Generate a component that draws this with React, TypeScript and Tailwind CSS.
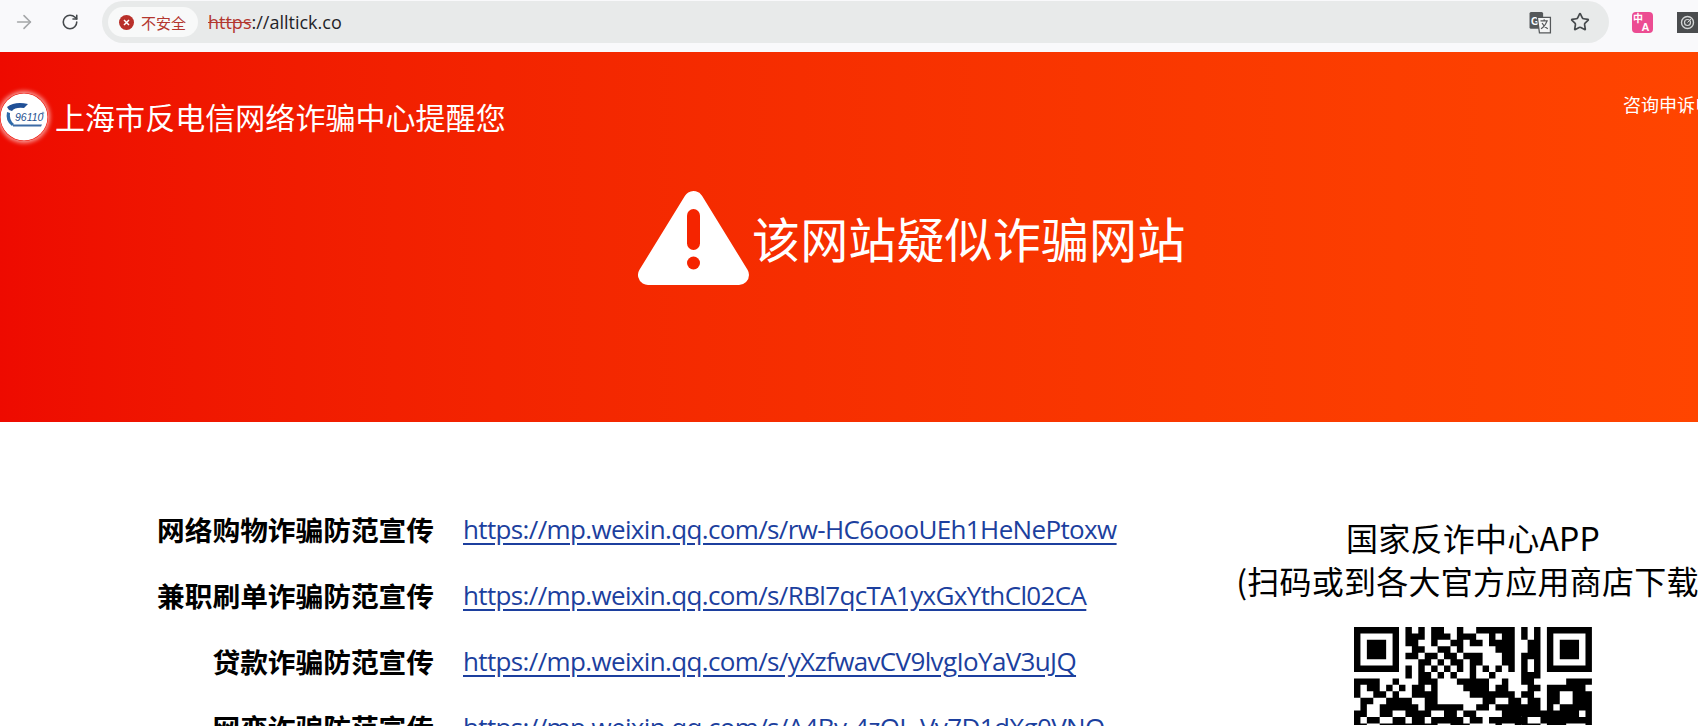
import React from "react";
import { ArrowRight, RotateCw, Star } from "lucide-react";

const CJK = "font-['Noto_Sans_CJK_SC','Noto_Sans',sans-serif]";

const rows = [
  { label: "网络购物诈骗防范宣传", url: "https://mp.weixin.qq.com/s/rw-HC6oooUEh1HeNePtoxw" },
  { label: "兼职刷单诈骗防范宣传", url: "https://mp.weixin.qq.com/s/RBl7qcTA1yxGxYthCl02CA" },
  { label: "贷款诈骗防范宣传", url: "https://mp.weixin.qq.com/s/yXzfwavCV9lvgIoYaV3uJQ" },
  { label: "网恋诈骗防范宣传", url: "https://mp.weixin.qq.com/s/A4Bv-4zQL-Vv7D1dXg0VNQ" },
];

const qr = [
  "1111111" + "0" + "101011001001111110101" + "0" + "1111111",
  "1000001" + "0" + "111011101110010110101" + "0" + "1000001",
  "1011101" + "0" + "110010011011011110011" + "0" + "1011101",
  "1011101" + "0" + "011001101000001110011" + "0" + "1011101",
  "1011101" + "0" + "110110110111000110111" + "0" + "1011101",
  "1000001" + "0" + "001101011011000110101" + "0" + "1000001",
  "1111111" + "0" + "101010101010101010101" + "0" + "1111111",
  "0000000" + "0" + "101101010010010000111" + "0" + "0000000",
  "1111001" + "0" + "001110001111100100110" + "0" + "0001111",
  "1011010" + "1" + "011010000111101100011" + "0" + "1111110",
  "1001101" + "0" + "011110000011111110110" + "0" + "1100111",
  "0110011" + "1" + "100110000000110011011" + "0" + "1100111",
  "0100111" + "1" + "110111111001101111111" + "0" + "1011111",
  "1100110" + "0" + "111100110110000111111" + "1" + "1111101",
  "1011001" + "1" + "011011111011011111100" + "1" + "1111111",
  "1100111" + "1" + "111110011100001001111" + "0" + "1110001",
];

function QrCode() {
  const d = qr
    .flatMap((row, y) => row.split("").map((c, x) => (c === "1" ? `M${x} ${y}h1v1h-1z` : "")))
    .join("");
  return (
    <svg width="256" height="106" viewBox="0 0 256 106" className="block bg-white">
      <path d={d} fill="#000" transform="translate(9 8) scale(6.43)" />
    </svg>
  );
}

function Logo() {
  return (
    <svg width="48" height="48" viewBox="0 0 48 48" className="block shrink-0 rounded-full shadow-[0_0_4px_2px_rgba(255,255,255,0.6)]">
      <circle cx="24" cy="24" r="23.5" fill="#fff" />
      <path d="M7 14 Q15 8 28 11 L24 15 Q15 14 12 18 L9 17 Z" fill="#1f4f96" />
      <path d="M7 19 Q5 28 12 33 L14 31 Q9 27 10 20 Z" fill="#2f6aaa" />
      <path d="M13 31.5 H42 L41 33.5 H13 Z" fill="#3d6aa5" />
      <text x="15" y="28" fontSize="10.5" fontStyle="italic" fontFamily="Liberation Sans" fill="#24508f">96110</text>
      <circle cx="43" cy="20" r="0.9" fill="none" stroke="#24508f" strokeWidth="0.5" />
    </svg>
  );
}

function Warning() {
  return (
    <svg width="112" height="96" viewBox="0 0 112 96" className="block shrink-0">
      <polygon points="55.5,11 10,85 101,85" fill="#fff" stroke="#fff" strokeWidth="20" strokeLinejoin="round" />
      <rect x="49" y="19" width="13" height="41" rx="6.5" fill="#f52400" />
      <circle cx="55.5" cy="73" r="6.5" fill="#f52400" />
    </svg>
  );
}

function TranslateIcon() {
  return (
    <svg width="23" height="23" viewBox="0 0 22 22" className="block">
      <rect x="0.5" y="1" width="13" height="16" rx="1.5" fill="#55585a" />
      <text x="2" y="13" fontSize="10" fontWeight="700" fontFamily="Liberation Sans" fill="#fff">G</text>
      <path d="M8 6 H20.5 V21 H10 Z" fill="#f4f5f5" stroke="#55585a" strokeWidth="1.2" />
      <path d="M11 9.5 H18 M14.5 8 V9.5 M17 10 Q15 15 11.5 17 M12.5 11.5 Q14 15 18 17" fill="none" stroke="#55585a" strokeWidth="1.1" />
    </svg>
  );
}

export default function App() {
  return (
    <div className={`w-[1698px] h-[726px] overflow-hidden bg-white flex flex-col ${CJK}`}>
      <div className="h-[52px] shrink-0 bg-[#f9f9fb] flex items-center pb-[8px]">
        <div className="w-[48px] flex justify-center"><ArrowRight size={22} strokeWidth={1.7} className="text-[#a4a6a8]" /></div>
        <div className="w-[44px] flex justify-center"><RotateCw size={18} strokeWidth={2.1} className="text-[#45494c]" /></div>
        <div className="ml-[10px] w-[1507px] h-[42px] rounded-full bg-[#e8eaea] flex items-center pl-[6px] pr-[19px]">
          <div className="w-[90px] h-[30px] rounded-full bg-[#f8f9f9] flex items-center pl-[11px] gap-[7px] shrink-0">
            <span className="w-[15px] h-[15px] rounded-full bg-[#b9302a] flex items-center justify-center">
              <svg width="7" height="7" viewBox="0 0 7 7"><path d="M1 1 L6 6 M6 1 L1 6" stroke="#fff" strokeWidth="1.5" /></svg>
            </span>
            <span className="text-[15px] leading-none text-[#b3372f] whitespace-nowrap">不安全</span>
          </div>
          <div className="ml-[10px] text-[18px] text-[#1f2328] font-['Open_Sans',sans-serif] whitespace-nowrap">
            <span className="line-through text-[#b3372f]">https</span><span>://alltick.co</span>
          </div>
          <div className="ml-auto flex items-center gap-[18px]">
            <TranslateIcon />
            <Star size={20} strokeWidth={2} className="text-[#45494c]" />
          </div>
        </div>
        <div className="ml-[23px] w-[21px] h-[21px] rounded-[4px] bg-[#ec4c92] grid grid-cols-2 grid-rows-2 text-white font-bold leading-none shrink-0">
          <span className="text-[10px] leading-[10px] pl-[1px] pt-[1px]">中</span>
          <span />
          <span />
          <span className="text-[11px] leading-[10px] -ml-[1px] font-['Liberation_Sans',sans-serif]">A</span>
        </div>
        <div className="ml-[24px] w-[21px] h-[21px] bg-[#4a4c4e] flex items-center justify-center shrink-0">
          <svg width="15" height="15" viewBox="0 0 15 15"><circle cx="7.5" cy="7.5" r="6" fill="none" stroke="#d3d5d6" strokeWidth="1.4" /><circle cx="7.5" cy="7.5" r="3" fill="none" stroke="#d3d5d6" strokeWidth="1.2" /><path d="M7.5 7.5 L11 4" stroke="#d3d5d6" /></svg>
        </div>
      </div>

      <div className="h-[370px] shrink-0 bg-linear-to-r from-[#ee0a00] to-[#ff4500] text-white flex flex-col">
        <div className="flex pt-[41px] justify-between">
          <div className="flex items-start gap-[8px]">
            <Logo />
            <span className="text-[30px] leading-[46px] tracking-[0.05px] whitespace-nowrap -ml-[1px]">上海市反电信网络诈骗中心提醒您</span>
          </div>
          <span className="w-[75px] -mt-[2px] text-[18px] leading-[26px] whitespace-nowrap">咨询申诉电话</span>
        </div>
        <div className="flex items-start ml-[638px] mt-[49px] gap-[2px]">
          <Warning />
          <span className="mt-[11px] text-[48px] leading-[72px] tracking-[0.15px] whitespace-nowrap">该网站疑似诈骗网站</span>
        </div>
      </div>

      <div className="flex">
        <div className="w-[1237px] shrink-0 pt-[74px] grid grid-cols-[434px_auto] gap-x-[29px] auto-rows-[66px] items-center justify-start">
          {rows.map((r) => (
            <React.Fragment key={r.label}>
              <div className="text-[27.7px] leading-[65px] font-bold text-black text-right whitespace-nowrap">{r.label}</div>
              <a href="#" className="text-[26px] leading-[66px] tracking-[-0.64px] text-[#1c3f9e] underline underline-offset-[4px] whitespace-nowrap font-['Open_Sans',sans-serif]">{r.url}</a>
            </React.Fragment>
          ))}
        </div>
        <div className="w-[472px] shrink-0 pt-[94px] flex flex-col items-center">
          <div className="text-[32px] leading-[43px] tracking-[0.25px] text-black text-center whitespace-nowrap">
            国家反诈中心APP<br />(扫码或到各大官方应用商店下载)
          </div>
          <div className="mt-[17px]"><QrCode /></div>
        </div>
      </div>
    </div>
  );
}
